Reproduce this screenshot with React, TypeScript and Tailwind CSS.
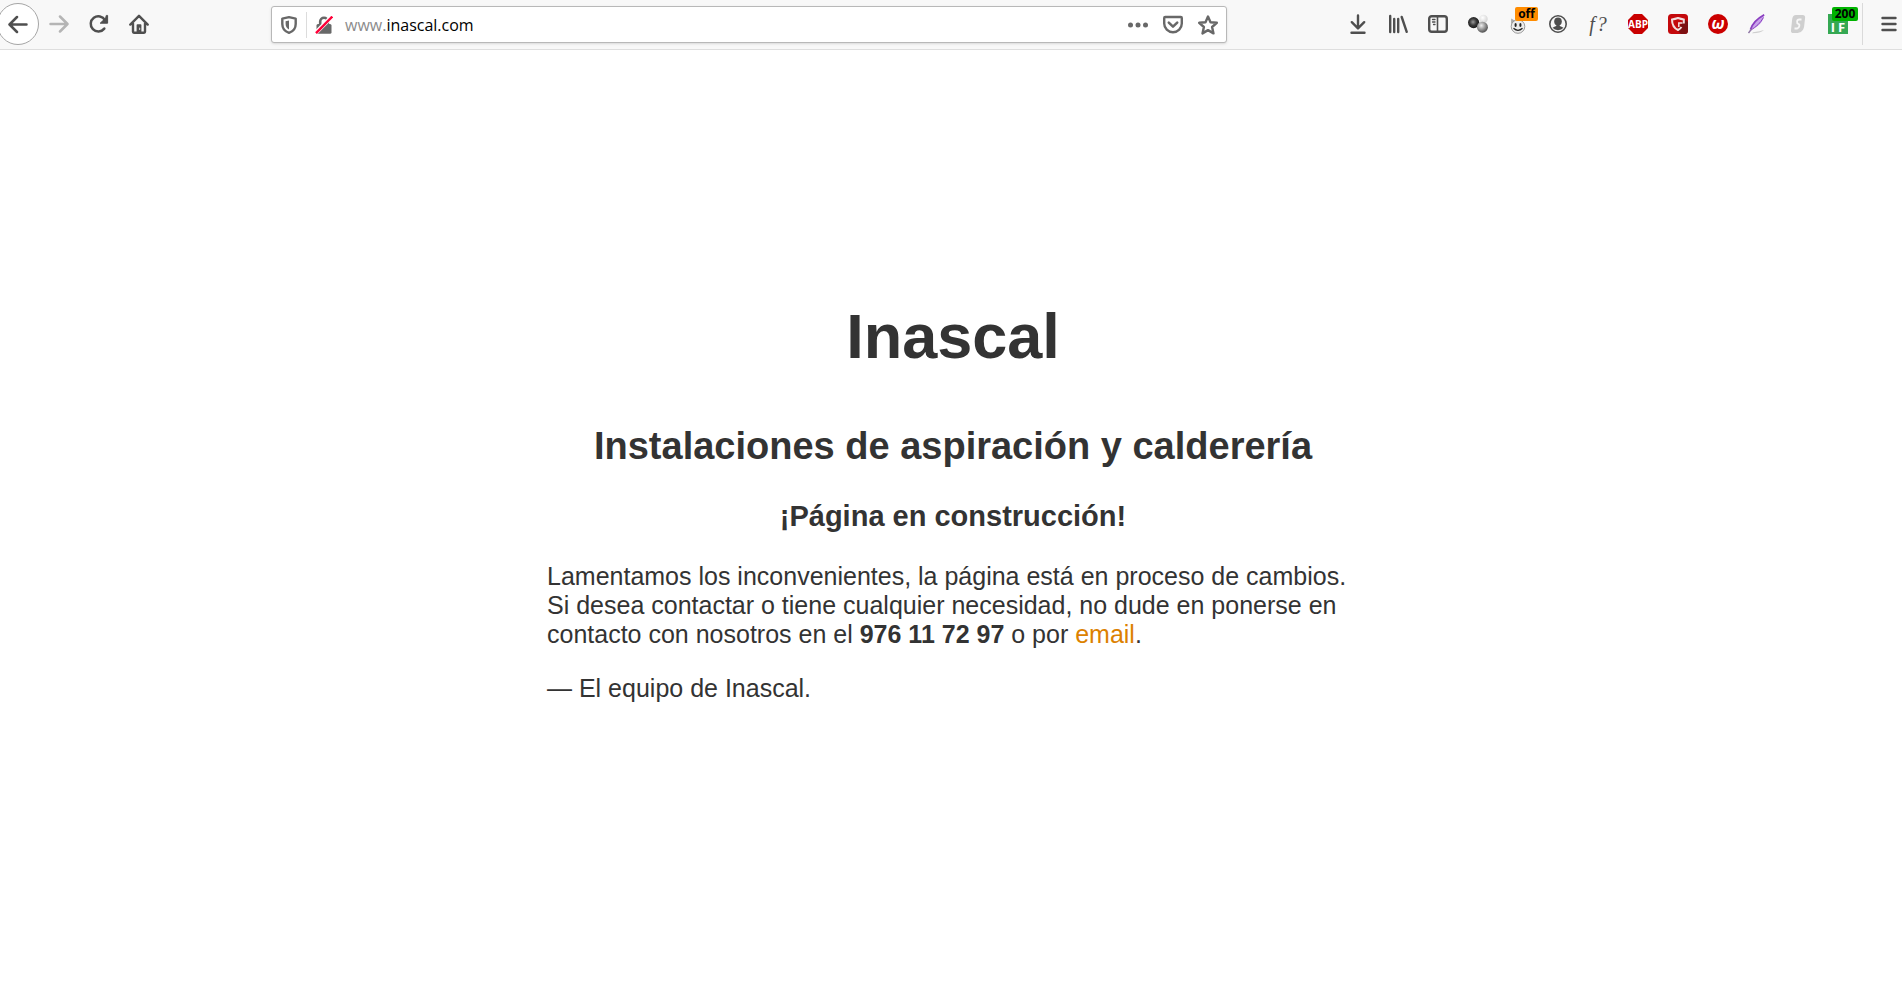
import type { ReactNode } from "react";

type ToolbarButtonProps = {
  label: string;
  children: ReactNode;
  disabled?: boolean;
};

const ToolbarButton = ({ label, children, disabled }: ToolbarButtonProps) => {
  return (
    <button
      type="button"
      aria-label={label}
      disabled={disabled}
      className="relative flex h-10 w-10 shrink-0 items-center justify-center text-[#4f4f4f] disabled:text-[#b5b5b5]"
    >
      {children}
    </button>
  );
};

type IconProps = {
  children: ReactNode;
  width?: number;
};

const Icon = ({ children, width = 2.2 }: IconProps) => {
  return (
    <svg
      viewBox="0 0 20 20"
      className="size-5"
      fill="none"
      stroke="currentColor"
      strokeWidth={width}
      strokeLinecap="round"
      strokeLinejoin="round"
      aria-hidden="true"
    >
      {children}
    </svg>
  );
};

const Navigation = () => {
  return (
    <nav className="flex shrink-0 items-center">
      <button
        type="button"
        aria-label="Atrás"
        className="-ml-[3px] flex size-[42px] items-center justify-center rounded-full border border-[#a6a6a6] bg-white text-[#4f4f4f]"
      >
        <Icon width={2.5}>
          <path d="M18.5 10.5H2M9 3l-7.5 7.5L9 18" />
        </Icon>
      </button>
      <ToolbarButton label="Adelante" disabled>
        <Icon width={2.5}>
          <path d="M1.5 10H18M11 2.5l7.5 7.5-7.5 7.5" />
        </Icon>
      </ToolbarButton>
      <ToolbarButton label="Recargar">
        <Icon width={2.5}>
          <path d="M15.3 14.6A7.6 7.6 0 1 1 16 6.2" />
          <path
            d="M18.6 1.8v7.4h-7.4l2.8-2.6 2.2-.6 1-4.2z"
            fill="currentColor"
            strokeWidth={1}
          />
        </Icon>
      </ToolbarButton>
      <ToolbarButton label="Inicio">
        <Icon width={2.4}>
          <path d="M1.3 10.6 10 1.8l8.7 8.8M4 9.5v8.3q0 .9.9.9h10.2q.9 0 .9-.9V9.5" />
          <path d="M7.6 18.5V11q0-.8.8-.8h3.2q.8 0 .8.8v7.5z" fill="currentColor" stroke="none" />
          <path d="M10.6 14.2v1.2" stroke="#c8c8c8" strokeWidth={1.2} />
        </Icon>
      </ToolbarButton>
    </nav>
  );
};

const AddressBar = () => {
  return (
    <div className="mt-px flex h-[37px] min-w-0 flex-1 items-center rounded-[3px] border border-[#b8b8b8] bg-white text-[#686868] shadow-sm">
      <button type="button" aria-label="Protección" className="ml-[9px] shrink-0">
        <svg viewBox="0 0 16 18" className="h-[18px] w-4" fill="none" aria-hidden="true">
          <path
            d="M8 1.2 14.7 2.6V8c0 4-2.5 7.4-6.7 8.8C3.8 15.4 1.3 12 1.3 8V2.6z"
            stroke="currentColor"
            strokeWidth="2.4"
            strokeLinejoin="round"
          />
          <path d="M8 4.5v9C5.8 12.2 4.6 10.5 4.6 8V5.2z" fill="currentColor" />
        </svg>
      </button>
      <span className="ml-[9px] h-[26px] w-px shrink-0 bg-[#dcdcdc]" />
      <button type="button" aria-label="Conexión no segura" className="ml-2 shrink-0">
        <svg viewBox="0 0 18 18" className="size-[18px]" fill="none" aria-hidden="true">
          <path d="M5.2 9V5.500a3.800 3.800 0 0 1 7.600 0V9" stroke="currentColor" strokeWidth="2.6" />
          <rect x="1.5" y="8" width="15" height="9.8" rx="1.5" fill="currentColor" />
          <path d="M1 16.500 16 1.500" stroke="#fff" strokeWidth="4.4" />
          <path d="M1 17.200 17.300.6" stroke="#ff0039" strokeWidth="2.4" />
        </svg>
      </button>
      <label
        htmlFor="url"
        className="ml-3 shrink-0 pt-px font-['Open_Sans',sans-serif] text-base text-[#8c8c8c]"
      >
        www.
      </label>
      <input
        id="url"
        type="text"
        defaultValue="inascal.com"
        className="min-w-0 flex-1 bg-transparent pt-px font-['Open_Sans',sans-serif] text-base text-black outline-none"
      />
      <div className="mr-2 flex shrink-0 items-center gap-[15px]">
        <button type="button" aria-label="Acciones de página">
          <Icon>
            <g fill="currentColor" stroke="none">
              <circle cx="2.5" cy="10" r="2.5" />
              <circle cx="10" cy="10" r="2.5" />
              <circle cx="17.5" cy="10" r="2.5" />
            </g>
          </Icon>
        </button>
        <button type="button" aria-label="Guardar en Pocket">
          <Icon width={2.4}>
            <path d="M2.200 2h15.600q1 0 1 1v5.500a8.800 8.800 0 0 1-17.600 0V3q0-1 1-1z" />
            <path d="m5.800 7.600 4.200 4 4.200-4" strokeWidth={2.6} />
          </Icon>
        </button>
        <button type="button" aria-label="Añadir a marcadores">
          <Icon width={2.4}>
            <path d="m10 1.500 2.500 5.700 6.300.6-4.700 4.200 1.400 6.400L10 15.100l-5.500 3.300L5.900 12 1.200 7.800l6.300-.6z" />
          </Icon>
        </button>
      </div>
    </div>
  );
};

const Extensions = () => {
  return (
    <div className="flex shrink-0 items-center">
      <ToolbarButton label="Descargas">
        <Icon width={2.4}>
          <path d="M10 1.500V14M3.800 8.200 10 14.400l6.200-6.200M3.500 18.700h13" />
        </Icon>
      </ToolbarButton>
      <ToolbarButton label="Catálogo">
        <Icon width={2.4}>
          <path d="M2.200 2v16M6.200 5v13M10.200 5v13M13.700 3l5 14.800" />
        </Icon>
      </ToolbarButton>
      <ToolbarButton label="Barra lateral">
        <Icon width={2.4}>
          <rect x="1.2" y="2.2" width="17.6" height="15.6" rx="2.5" />
          <path d="M9.500 2.500v15" strokeWidth={1.6} />
          <path d="M4.500 5.500h2.500M4.500 8h2.500M5.500 10.500h1.500" strokeWidth={1.3} />
        </Icon>
      </ToolbarButton>
      <ToolbarButton label="Proxy">
        <svg viewBox="0 0 20 20" className="size-5" aria-hidden="true">
          <defs>
            <radialGradient id="dark-ball" cx=".45" cy=".45" r=".6">
              <stop offset="0" stopColor="#999" />
              <stop offset=".5" stopColor="#3a3a3a" />
              <stop offset="1" stopColor="#111" />
            </radialGradient>
            <radialGradient id="gray-ball" cx=".4" cy=".35" r=".7">
              <stop offset="0" stopColor="#eee" />
              <stop offset=".5" stopColor="#999" />
              <stop offset="1" stopColor="#444" />
            </radialGradient>
            <radialGradient id="white-ball" cx=".4" cy=".35" r=".7">
              <stop offset="0" stopColor="#fff" />
              <stop offset="1" stopColor="#cfcfcf" />
            </radialGradient>
          </defs>
          <circle cx="15.5" cy="5" r="4.2" fill="url(#white-ball)" />
          <circle cx="5.6" cy="8.6" r="5.6" fill="url(#dark-ball)" />
          <circle cx="14.4" cy="13.2" r="5.5" fill="url(#gray-ball)" />
        </svg>
      </ToolbarButton>
      <ToolbarButton label="Greasemonkey">
        <svg viewBox="0 0 20 20" className="size-5" aria-hidden="true">
          <path d="m3 10 .2-5.500L7.500 7z" fill="#aaa" />
          <circle cx="10" cy="12.5" r="6.8" fill="#ececec" stroke="#999" />
          <ellipse cx="7.6" cy="11" rx="1.1" ry="1.900" fill="#222" />
          <ellipse cx="12.400" cy="11" rx="1.1" ry="1.900" fill="#222" />
          <path d="M5.500 14.300q4.500 4 9 0" fill="none" stroke="#222" strokeWidth="1.2" />
        </svg>
        <span className="absolute top-[3px] left-[17px] flex h-[14px] w-[23px] items-center justify-center rounded-xs bg-[#ff8c00] font-['Open_Sans',sans-serif] text-xs font-bold text-black">
          off
        </span>
      </ToolbarButton>
      <ToolbarButton label="Cuenta">
        <Icon width={1.6}>
          <circle cx="10" cy="10" r="8.2" />
          <g fill="currentColor" stroke="none">
            <ellipse cx="10" cy="7.4" rx="3.8" ry="4" />
            <path d="M4.500 13.800q2-1.300 3.700-1.700.2-.4.2-1.100h3.200q0 .7.200 1.100 1.700.4 3.700 1.700Q13.500 16.200 10 16.200t-5.500-2.400z" />
          </g>
        </Icon>
      </ToolbarButton>
      <ToolbarButton label="Fuentes">
        <span className="flex gap-0.5 font-['Liberation_Serif',serif] text-xl leading-5 italic">
          <span>f</span>
          <span>?</span>
        </span>
      </ToolbarButton>
      <ToolbarButton label="Adblock Plus">
        <svg viewBox="0 0 20 20" className="absolute size-5" aria-hidden="true">
          <path d="M6 0h8l6 6v8l-6 6H6l-6-6V6z" fill="#c90000" />
        </svg>
        <span className="relative font-['Open_Sans',sans-serif] text-[10px] font-bold text-white">
          ABP
        </span>
      </ToolbarButton>
      <ToolbarButton label="Escudo">
        <svg viewBox="0 0 20 20" className="size-5" aria-hidden="true">
          <rect width="20" height="20" rx="3.5" fill="#c4090c" />
          <path d="m16.500 5 3.500 3v8.500q0 3.500-3.500 3.500H13l-4-4z" fill="#7d1011" />
          <path
            d="M15.800 9.500V5.500Q13 5 10 4 7 5 4 5.500c0 4.500 1.500 8.500 6 10.500 1.500-.8 2.700-1.800 3.500-3"
            fill="none"
            stroke="#f3dede"
            strokeWidth="2"
          />
          <path d="M14.500 9h-3.700v4" fill="none" stroke="#f3dede" strokeWidth="1.5" />
        </svg>
      </ToolbarButton>
      <ToolbarButton label="Wappalyzer">
        <span className="flex size-5 items-center justify-center rounded-full bg-[#cb0000] pb-[2px] font-['Open_Sans',sans-serif] text-base leading-4 font-bold text-white italic">
          ω
        </span>
      </ToolbarButton>
      <ToolbarButton label="Pluma">
        <svg viewBox="0 0 20 20" className="size-5" fill="none" aria-hidden="true">
          <path d="M4 19.200q8 .2 12-3.200-4 1.500-11 2.200z" fill="#cfcfcf" />
          <path d="M16.200.8C9 4.500 3 9.500 2.500 15.500 9 13.500 14.500 10 16.200.8z" fill="#c9a4ea" />
          <path d="M16.200.8C9.500 4.500 4.500 9.500 2.500 15.500" stroke="#8a3fc0" strokeWidth="1.8" />
          <path d="M15.500 3.500C12.500 9 8 13 3 16" stroke="#8a3fc0" strokeWidth="1" />
          <path d="m3.500 15-3 4" stroke="#8f77a5" strokeWidth="1.4" />
        </svg>
      </ToolbarButton>
      <ToolbarButton label="Stylus">
        <svg viewBox="0 0 20 20" className="size-5" fill="none" aria-hidden="true">
          <path
            d="M8 1h6.500q3 0 2.600 3l-1 8.500C15.500 17 12 19 8.500 19H5.200q-2.600 0-2.200-2.800L4.200 5Q4.800 1 8 1z"
            fill="#cfcfcf"
          />
          <path
            d="M13.500 5.500h-2.200q-2 0-2.200 2t1.200 2.300 1 2.400-2.100 2.300H6.500"
            stroke="#f7f7f7"
            strokeWidth="1.8"
          />
        </svg>
      </ToolbarButton>
      <ToolbarButton label="Lector">
        <span className="flex size-5 items-end justify-center gap-[3px] bg-[#35a853] font-['Open_Sans',sans-serif] text-[13px] leading-[14px] font-bold text-white">
          <span>I</span>
          <span>F</span>
        </span>
        <span className="absolute top-[3px] left-[14px] flex h-[14px] w-[26px] items-center justify-center rounded-xs bg-[#00b300] font-['Open_Sans',sans-serif] text-xs font-bold text-black">
          200
        </span>
      </ToolbarButton>
      <span className="ml-1 h-[42px] w-px bg-[#dadada]" />
      <button
        type="button"
        aria-label="Abrir menú"
        className="flex h-10 w-[39px] items-center justify-end pr-[3px] text-[#4f4f4f]"
      >
        <Icon width={2.4}>
          <path d="M3.500 4h13M3.500 10h13M3.500 16h13" />
        </Icon>
      </button>
    </div>
  );
};

const App = () => {
  return (
    <div className="min-h-screen bg-white">
      <header className="flex h-[50px] items-center overflow-hidden border-b border-[#dedede] bg-[#f8f8f8] pb-px">
        <Navigation />
        <div className="w-28 shrink-0" />
        <AddressBar />
        <div className="w-[111px] shrink-0" />
        <Extensions />
      </header>
      <main className="pt-[250px] pl-1 font-['Liberation_Sans',Arial,sans-serif] text-[25px] leading-[29px] text-[#333]">
        <article className="mx-auto max-w-[812px]">
          <h1 className="text-center text-[63px] leading-[72px] font-bold">Inascal</h1>
          <h2 className="mt-[52px] text-center text-[38px] leading-[44px] font-bold">
            Instalaciones de aspiración y calderería
          </h2>
          <h3 className="mt-[31px] text-center text-[29px] leading-[34px] font-bold">
            ¡Página en construcción!
          </h3>
          <p className="mt-[29px]">
            Lamentamos los inconvenientes, la página está en proceso de cambios. Si desea
            contactar o tiene cualquier necesidad, no dude en ponerse en contacto con nosotros
            en el <strong>976 11 72 97</strong> o por{" "}
            <a href="mailto:info@inascal.com" className="text-[#dc8100]">
              email
            </a>
            .
          </p>
          <p className="mt-[25px]">— El equipo de Inascal.</p>
        </article>
      </main>
    </div>
  );
};

export default App;
